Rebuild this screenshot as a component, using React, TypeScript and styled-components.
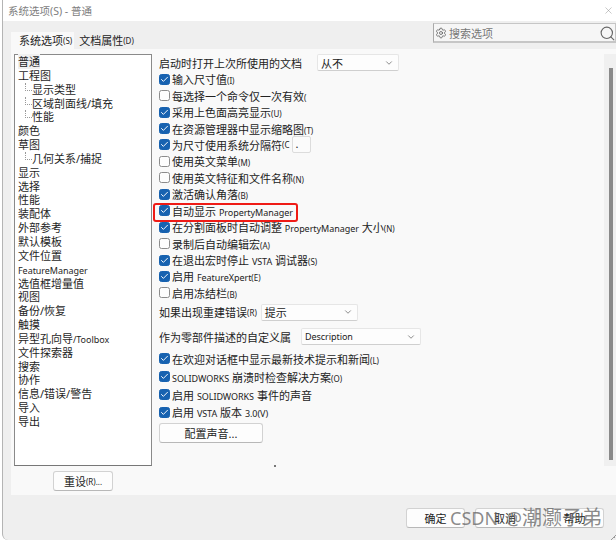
import React from 'react';
import styled, { createGlobalStyle } from 'styled-components';
import { Check, ChevronDown, Settings, Search, X } from 'lucide-react';

const Global = createGlobalStyle`
  html, body { margin: 0; padding: 0; background: #fff; }
  #root { width: 616px; height: 540px; overflow: hidden; }
`;
const Win = styled.div`
  position: relative; width: 614px; height: 540px; margin-left: 2px; background: #efefef;
  border-bottom-left-radius: 6px; border-left: 1px solid #b4b4b4; box-sizing: border-box;
  display: flex; flex-direction: column; overflow: hidden;
  font-family: "Noto Sans", "Noto Sans CJK SC", sans-serif; color: #222; font-size: 11px;
`;
const Title = styled.div`
  height: 21px; flex: none; background: #fff; display: flex; align-items: center; justify-content: space-between;
  padding: 0 2px 0 5px; color: #7d7d7d; font-size: 10.5px;
  svg { color: #888; }
`;
const TabBar = styled.div`
  height: 28px; flex: none; display: flex; align-items: flex-end; padding-left: 8px; position: relative;
`;
const Tab = styled.div<{ $on?: boolean }>`
  height: ${p => (p.$on ? 17 : 16)}px; display: flex; align-items: center; white-space: nowrap;
  padding: 0 2px 0 ${p => (p.$on ? 8 : 5)}px;
  background: ${p => (p.$on ? '#f9f9f9' : 'transparent')}; font-size: 11px; line-height: 16px;
`;
const Small = styled.span`font-size: 8px;`;
const Latin = styled.span`font-size: 9px; letter-spacing: -.05px;`;
const SearchBox = styled.div`
  position: absolute; left: 430px; top: 2px; width: 183px; height: 20px; box-sizing: border-box;
  background: #f6f6f6; border: 1px solid #c6c6c6; border-bottom-width: 2px; border-left-color: #aaa;
  display: flex; align-items: center; gap: 2px; padding-left: 1px; color: #777; font-size: 11px;
  svg.mag { position: absolute; right: -1px; top: 1px; color: #666; }
  svg.gear { color: #555; }
`;
const Pane = styled.div`
  flex: none; margin-left: 8px; height: 446px; background: #f9f9f9; display: flex; position: relative;
`;
const Left = styled.div`
  width: 148px; flex: none; display: flex; flex-direction: column; align-items: flex-start; padding: 5px 0 0 3px; box-sizing: border-box;
`;
const List = styled.div`
  width: 138px; height: 412px; flex: none; box-sizing: border-box; background: #fff;
  border: 1px solid #8a8a8a; border-bottom: 1px solid #777; padding: 0 0 0 3px; line-height: 13.85px; font-size: 11px; color: #1f1f1f;
`;
const Item = styled.div<{ $sub?: boolean; $sel?: boolean }>`
  height: 13.85px; white-space: nowrap; position: relative;
  padding-left: ${p => (p.$sub ? 14 : 0)}px;
  ${p => p.$sub ? `&::before { content: ''; position: absolute; left: 7px; top: 0; width: 6px; height: 7px; border-left: 1px dotted #999; border-bottom: 1px dotted #999; }` : ''}
  ${p => p.$sel ? `> span { background: #f0f0f0; }` : ''}
`;
const Btn = styled.div<{ $w: number }>`
  width: ${p => p.$w}px; height: 20px; box-sizing: border-box; background: #fdfdfd; border: 1px solid #d2d2d2;
  border-bottom-color: #b8b8b8; border-radius: 3px; display: flex; align-items: center; justify-content: center;
  font-size: 11px; flex: none;
`;
const ResetWrap = styled.div`margin: 5px 0 0 39px;`;
const Right = styled.div`
  flex: 1; display: flex; flex-direction: column; padding: 5px 0 0 0; min-width: 0;
`;
const Line = styled.div<{ $h?: number }>`
  display: flex; align-items: center; height: ${p => p.$h ?? 16.45}px; white-space: nowrap; flex: none;
`;
const Box = styled.div<{ $on: boolean }>`
  width: 11px; height: 11px; box-sizing: border-box; border-radius: 2.5px; margin-right: 2px; flex: none;
  display: flex; align-items: center; justify-content: center; color: #fff;
  background: ${p => (p.$on ? '#1762b0' : '#fdfdfd')}; border: 1px solid ${p => (p.$on ? '#1762b0' : '#8c8c8c')};
`;
const Select = styled.div<{ $w: number; $ml: number }>`
  width: ${p => p.$w}px; height: 17px; margin-left: ${p => p.$ml}px; box-sizing: border-box; background: #fdfdfd;
  border: 1px solid #e6e6e6; border-bottom-color: #cfcfcf; border-radius: 2px; display: flex; align-items: center;
  justify-content: space-between; padding: 0 4px 0 3px; flex: none; svg { color: #777; }
`;
const Mini = styled.div`
  width: 19px; height: 17px; margin-left: 3px; box-sizing: border-box; background: #fbfbfb; border: 1px solid #dcdcdc; border-radius: 2px;
  padding-left: 2px; line-height: 13px;
`;
const Label = styled.span`white-space: pre;`;
const Highlight = styled.div`
  position: absolute; left: 142px; top: 154px; width: 145px; height: 19px; border: 2px solid #ef1b16; border-radius: 3px; box-sizing: border-box;
`;
const Scroll = styled.div`
  position: absolute; right: 0; top: 5px; width: 12px; height: 412px; background: #f0f0f0;
  display: flex; justify-content: center; padding-top: 14px; box-sizing: border-box;
`;
const Thumb = styled.div`width: 4px; height: 392px; background: #8a8a8a; margin-left: 1px;`;
const Dot = styled.div`position: absolute; left: 263px; top: 416px; width: 2px; height: 2px; background: #777;`;
const Foot = styled.div`
  flex: 1; display: flex; justify-content: flex-end; gap: 10px; padding: 13px 12px 0 0;
`;
const Watermark = styled.div`
  position: absolute; left: 450px; top: 505px; font-family: "Noto Sans", "Noto Sans CJK SC", sans-serif; font-size: 18px; line-height: 26px; color: rgba(100,100,100,.75); white-space: nowrap; word-spacing: 3px;
`;
const WatermarkCjk = styled.span`font-size: 20px;`;
const Grip = styled.div`
  position: absolute; right: 0; bottom: 0; width: 5px; height: 5px;
  background: linear-gradient(135deg, transparent 45%, #999 45%, #999 60%, transparent 60%);
`;

const Row = ({ on, children }: { on: boolean; children: React.ReactNode }) => (
  <Line>
    <Box $on={on}>{on && <Check size={9} strokeWidth={2.5} />}</Box>
    <Label>{children}</Label>
  </Line>
);
const TallRow = ({ h, children }: { h: number; children: React.ReactNode }) => (
  <Line $h={h}>
    <Box $on><Check size={9} strokeWidth={2.5} /></Box>
    <Label>{children}</Label>
  </Line>
);

const tree: [string, boolean?][] = [
  ['工程图'], ['显示类型', true], ['区域剖面线/填充', true], ['性能', true], ['颜色'], ['草图'], ['几何关系/捕捉', true],
  ['显示'], ['选择'], ['性能'], ['装配体'], ['外部参考'], ['默认模板'], ['文件位置'],
];
const tree2 = ['选值框增量值', '视图', '备份/恢复', '触摸'];
const tree3 = ['文件探索器', '搜索', '协作', '信息/错误/警告', '导入', '导出'];

export default function App() {
  return (
    <>
      <Global />
      <Win>
        <Title>
          <span>系统选项(S) - 普通</span>
          <X size={11} strokeWidth={1} />
        </Title>
        <TabBar>
          <Tab $on>系统选项<Small>(S)</Small></Tab>
          <Tab>文档属性<Small>(D)</Small></Tab>
          <SearchBox>
            <Settings className="gear" size={12} strokeWidth={1.5} />
            搜索选项
            <Search className="mag" size={17} strokeWidth={1.6} />
          </SearchBox>
        </TabBar>
        <Pane>
          <Left>
            <List>
              <Item $sel><span>普通</span></Item>
              {tree.map(([t, sub], i) => <Item key={i} $sub={sub}>{t}</Item>)}
              <Item><Latin>FeatureManager</Latin></Item>
              {tree2.map(t => <Item key={t}>{t}</Item>)}
              <Item>异型孔向导<Latin>/Toolbox</Latin></Item>
              {tree3.map(t => <Item key={t}>{t}</Item>)}
            </List>
            <ResetWrap><Btn $w={60}>重设<Small>(R)...</Small></Btn></ResetWrap>
          </Left>
          <Right>
            <Line $h={17}>启动时打开上次所使用的文档<Select $w={82} $ml={15}>从不<ChevronDown size={10} /></Select></Line>
            <Row on>输入尺寸值<Small>(I)</Small></Row>
            <Row on={false}>每选择一个命令仅一次有效<Small>(</Small></Row>
            <Row on>采用上色面高亮显示<Small>(U)</Small></Row>
            <Row on>在资源管理器中显示缩略图<Small>(T)</Small></Row>
            <Line>
              <Box $on><Check size={9} strokeWidth={2.5} /></Box>为尺寸使用系统分隔符<Small>(C</Small><Mini>.</Mini>
            </Line>
            <Row on={false}>使用英文菜单<Small>(M)</Small></Row>
            <Row on={false}>使用英文特征和文件名称<Small>(N)</Small></Row>
            <Row on>激活确认角落<Small>(B)</Small></Row>
            <Row on>自动显示 <Latin>PropertyManager</Latin></Row>
            <Row on>在分割面板时自动调整 <Latin>PropertyManager</Latin> 大小<Small>(N)</Small></Row>
            <Row on={false}>录制后自动编辑宏<Small>(A)</Small></Row>
            <Row on>在退出宏时停止 <Latin>VSTA</Latin> 调试器<Small>(S)</Small></Row>
            <Row on>启用 <Latin>FeatureXpert</Latin><Small>(E)</Small></Row>
            <Row on={false}>启用冻结栏<Small>(B)</Small></Row>
            <Line $h={22}>如果出现重建错误<Small>(R)</Small><Select $w={97} $ml={4}>提示<ChevronDown size={10} /></Select></Line>
            <Line $h={27}>作为零部件描述的自定义属<Select $w={120} $ml={10}><Latin>Description</Latin><ChevronDown size={10} /></Select></Line>
            <TallRow h={17}>在欢迎对话框中显示最新技术提示和新闻<Small>(L)</Small></TallRow>
            <TallRow h={19}><Latin>SOLIDWORKS</Latin> 崩溃时检查解决方案<Small>(O)</Small></TallRow>
            <TallRow h={17}>启用 <Latin>SOLIDWORKS</Latin> 事件的声音</TallRow>
            <TallRow h={18}>启用 <Latin>VSTA</Latin> 版本 <Latin>3.0(V)</Latin></TallRow>
            <Line $h={24}><Btn $w={104}>配置声音...</Btn></Line>
          </Right>
          <Highlight />
          <Scroll><Thumb /></Scroll>
          <Dot />
        </Pane>
        <Foot>
          <Btn $w={59}>确定</Btn>
          <Btn $w={60}>取消</Btn>
          <Btn $w={59}>帮助</Btn>
        </Foot>
        <Grip />
      </Win>
      <Watermark>CSDN @<WatermarkCjk>潮灏子弟</WatermarkCjk></Watermark>
    </>
  );
}
